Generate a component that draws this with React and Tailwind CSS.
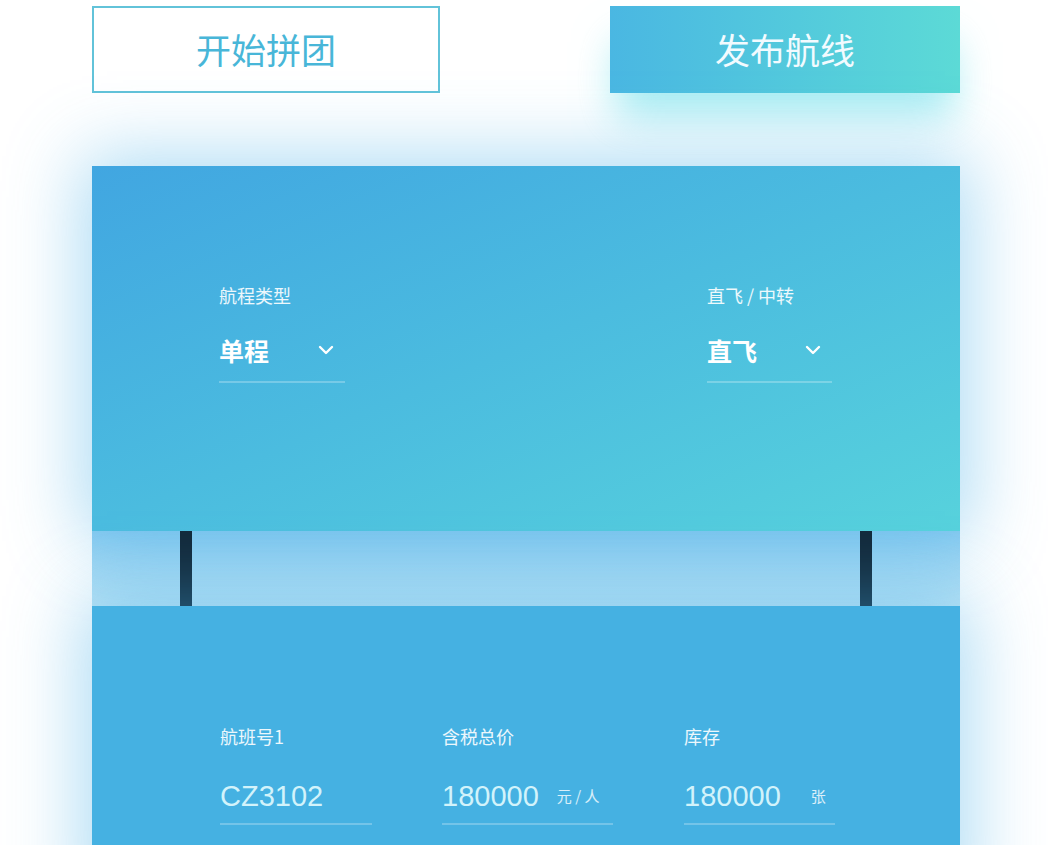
import React from "react";

const font = { fontFamily: '"Noto Sans CJK SC", "Noto Sans", sans-serif' };

function Chevron() {
  return (
    <svg width="18" height="12" viewBox="0 0 18 12" fill="none">
      <path d="M3 3 L9 9 L15 3" stroke="white" strokeWidth="2.4" strokeLinecap="round" strokeLinejoin="round" />
    </svg>
  );
}

function Select({ label, value, width }) {
  return (
    <div className={`flex flex-col ${width}`}>
      <div className="text-[18px] leading-[22px] text-white/90">{label}</div>
      <div className="mt-[29px] flex items-center justify-between pr-[10px] text-[25px] leading-[30px] font-bold text-white">
        <span>{value}</span>
        <Chevron />
      </div>
      <div className="mt-[16px] h-[2px] bg-white/25" />
    </div>
  );
}

function Field({ label, value, unit, width, unitGap }) {
  return (
    <div className={`flex flex-col ${width}`}>
      <div className="text-[18px] leading-[22px] text-white/90">{label}</div>
      <div className="mt-[32px] flex items-center text-[29px] leading-[34px] text-[#d2f3fb]" style={{ fontFamily: '"Liberation Sans", "Noto Sans CJK SC", sans-serif' }}>
        <span>{value}</span>
        {unit && <span className={`${unitGap} text-[15px] text-white/80`} style={font}>{unit}</span>}
      </div>
      <div className="mt-[10px] h-[2px] bg-white/25" />
    </div>
  );
}

export default function App() {
  return (
    <div className="w-[1048px] h-[845px] overflow-hidden bg-white" style={font}>
      <div className="mx-[92px] w-[868px] pt-[6px]">
        <div className="flex justify-between">
          <button className="w-[348px] h-[87px] border-2 border-[#62c3d9] bg-white text-[35px] text-[#48b6d8]">
            开始拼团
          </button>
          <button className="w-[350px] h-[87px] bg-gradient-to-r from-[#4ab7e2] to-[#5cdad6] text-[35px] text-[#f2fbff] shadow-[0_30px_40px_-6px_rgba(110,225,235,0.6)]">
            发布航线
          </button>
        </div>

        <div className="relative mt-[73px]">
          <div className="absolute left-0 right-0 top-[360px] h-[90px] bg-gradient-to-b from-[#8ccdf1] to-[#c4e8f6]" />
          <div className="relative h-[365px] bg-gradient-to-br from-[#41a6e1] to-[#57d2dc] shadow-[0_0_70px_10px_rgba(70,175,230,0.45)] pl-[127px] pr-[128px] pt-[118px]">
            <div className="flex justify-between">
              <Select label="航程类型" value="单程" width="w-[126px]" />
              <Select label="直飞 / 中转" value="直飞" width="w-[125px]" />
            </div>
          </div>
          <div className="relative flex h-[75px] justify-between px-[88px]">
            <div className="w-[12px] bg-[#12293a]" />
            <div className="w-[12px] bg-[#12293a]" />
          </div>
          <div className="relative h-[300px] bg-[#45b1e2] shadow-[0_0_70px_10px_rgba(70,175,230,0.45)] pl-[128px] pt-[119px]">
            <div className="flex">
              <Field label="航班号1" value="CZ3102" width="w-[152px]" />
              <div className="w-[70px]" />
              <Field label="含税总价" value="180000" unit="元 / 人" unitGap="ml-[18px]" width="w-[171px]" />
              <div className="w-[71px]" />
              <Field label="库存" value="180000" unit="张" unitGap="ml-[30px]" width="w-[151px]" />
            </div>
          </div>
        </div>
      </div>
    </div>
  );
}
